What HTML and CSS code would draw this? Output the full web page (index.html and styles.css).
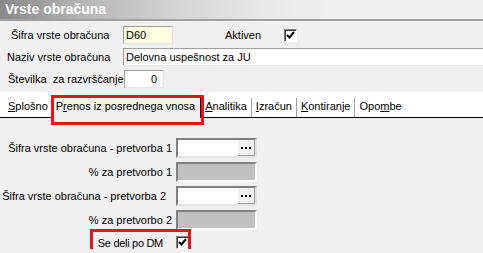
FILE: index.html
```html
<!DOCTYPE html>
<html lang="sl">

<head>
  <meta charset="UTF-8">
  <title>Vrste obračuna</title>
  <link rel="stylesheet" href="styles.css">
</head>

<body>
  <div class="titlebar">Vrste obračuna</div>

  <div class="head">
    <div class="row">
      <span class="label l1">Šifra vrste obračuna</span>
      <span class="field code">D60</span>
      <span class="label active">Aktiven</span>
      <span class="check"><svg width="9" height="9" viewBox="0 0 9 9"><path d="M1 4 L3.5 6.5 L8 1" fill="none" stroke="#000" stroke-width="2"/></svg></span>
    </div>
    <div class="row">
      <span class="label l2">Naziv vrste obračuna</span>
      <span class="field name">Delovna uspešnost za JU</span>
    </div>
    <div class="row">
      <span class="label l3">Številka&nbsp; za razvrščanje</span>
      <span class="field order">0</span>
    </div>
  </div>

  <div class="tabs">
    <span class="tab first"><u>S</u>plošno</span>
    <span class="tab selected">P<u>r</u>enos iz posrednega vnosa</span>
    <span class="tab"><u>A</u>nalitika</span>
    <span class="tab"><u>I</u>zračun</span>
    <span class="tab"><u>K</u>ontiranje</span>
    <span class="tab last">Opo<u>m</u>be</span>
  </div>

  <div class="conv">
    <span class="label">Šifra vrste obračuna - pretvorba 1</span>
    <span class="lookup"><span class="lookup-text"></span><span class="dots"><svg width="10" height="2" viewBox="0 0 10 2"><rect x="0" width="2" height="2"/><rect x="4" width="2" height="2"/><rect x="8" width="2" height="2"/></svg></span></span>

    <span class="label">% za pretvorbo 1</span>
    <span class="field disabled"></span>

    <span class="label wide">Šifra vrste obračuna - pretvorba 2</span>
    <span class="lookup"><span class="lookup-text"></span><span class="dots"><svg width="10" height="2" viewBox="0 0 10 2"><rect x="0" width="2" height="2"/><rect x="4" width="2" height="2"/><rect x="8" width="2" height="2"/></svg></span></span>

    <span class="label">% za pretvorbo 2</span>
    <span class="field disabled"></span>

    <span class="label dm">Se deli po DM</span>
    <span class="dm-check"><span class="check"><svg width="9" height="9" viewBox="0 0 9 9"><path d="M1 4 L3.5 6.5 L8 1" fill="none" stroke="#000" stroke-width="2"/></svg></span></span>
  </div>
</body>

</html>
```

FILE: styles.css
```css
body {
  margin: 0;
  background-color: #f0f0f0;
  font-family: "Liberation Sans", Arial, sans-serif;
  font-size: 11px;
  color: #000;
  overflow: hidden;
}

.titlebar {
  height: 19px;
  line-height: 19px;
  padding-left: 5px;
  color: white;
  font-weight: bold;
  font-size: 14px;
  background: linear-gradient(to right, #888888 0, #b4b4b4 80px, #d2d2d2 170px, #e8e8e8 260px, #f0f0f0 330px);
  border-bottom: 2px solid #a0a0a0;
}

.head {
  padding-top: 5px;
}

.row {
  display: flex;
  align-items: center;
  height: 18px;
  margin-bottom: 4px;
}

.label {
  white-space: nowrap;
}

.head .label.l1,
.head .label.l2,
.head .label.l3 {
  width: 123px;
  box-sizing: border-box;
}

.l1 { padding-left: 11px; }
.l2 { padding-left: 7px; }
.l3 { padding-left: 8px; }

.field {
  box-sizing: border-box;
  height: 18px;
  line-height: 16px;
  padding: 0 2px;
  background-color: white;
  border: 1px solid;
  border-color: #a0a0a0 #e3e3e3 #e3e3e3 #a0a0a0;
}

.field.code {
  width: 50px;
  background-color: #ffffe1;
}

.label.active {
  margin-left: 52px;
  width: 59px;
}

.field.name {
  flex: 1;
  border-right: none;
}

.field.order {
  width: 40px;
  margin-left: 1px;
  text-align: right;
  padding-right: 6px;
}

.check {
  box-sizing: border-box;
  width: 13px;
  height: 13px;
  display: inline-flex;
  align-items: center;
  justify-content: center;
  background-color: white;
  border: 1px solid;
  border-color: #808080 #fff #fff #808080;
  box-shadow: inset 1px 1px 0 #404040;
}

.tabs {
  margin-top: 2px;
  height: 26px;
  box-sizing: border-box;
  background-color: white;
  border-bottom: 1px solid #000;
  display: flex;
  align-items: flex-end;
  padding-left: 8px;
}

.tab {
  height: 19px;
  line-height: 16px;
  padding: 0 4px;
  border-left: 1px solid #a0a0a0;
  white-space: nowrap;
}

.tab.first {
  border-left: none;
  padding-left: 0;
  padding-right: 3px;
}

.tab.selected {
  position: relative;
  height: 21px;
  margin-bottom: -1px;
  padding: 0 5px 0 4px;
  line-height: 18px;
  background-color: #f0f0f0;
  border-left: 1px solid #f0f0f0;
  border-right: 1px solid #000;
}

.tab.selected + .tab {
  border-left: none;
}

.tab.selected::after {
  content: "";
  position: absolute;
  left: -1px;
  top: -2px;
  right: -4px;
  bottom: -7px;
  border: 3px solid #e8141c;
}

.conv {
  display: grid;
  grid-template-columns: 172px 81px;
  column-gap: 4px;
  row-gap: 4px;
  align-items: center;
  padding-top: 20px;
}

.conv .label {
  text-align: right;
}

.conv .label.wide {
  margin-right: 6px;
}

.lookup {
  box-sizing: border-box;
  height: 20px;
  display: flex;
  background-color: white;
  border: 2px solid;
  border-color: #808080 #e3e3e3 #e3e3e3 #808080;
}

.lookup-text {
  flex: 1;
}

.dots {
  width: 18px;
  height: 16px;
  box-sizing: border-box;
  display: flex;
  align-items: center;
  justify-content: center;
  background-color: #f0f0f0;
  border-left: 1px solid #fff;
  border-right: 1px solid #a0a0a0;
  border-bottom: 1px solid #a0a0a0;
}

.field.disabled {
  height: 20px;
  background-color: #c0c0c0;
  border: 2px solid;
  border-color: #808080 #fff #fff #808080;
}

.label.dm {
  position: relative;
  margin-top: 2px;
  padding-right: 9px;
  letter-spacing: -0.3px;
}

.dm-check {
  display: flex;
  margin-top: 2px;
}

.label.dm::after {
  content: "";
  position: absolute;
  left: 90px;
  top: -8px;
  width: 95px;
  height: 18px;
  border: 3px solid #e8141c;
}
```
